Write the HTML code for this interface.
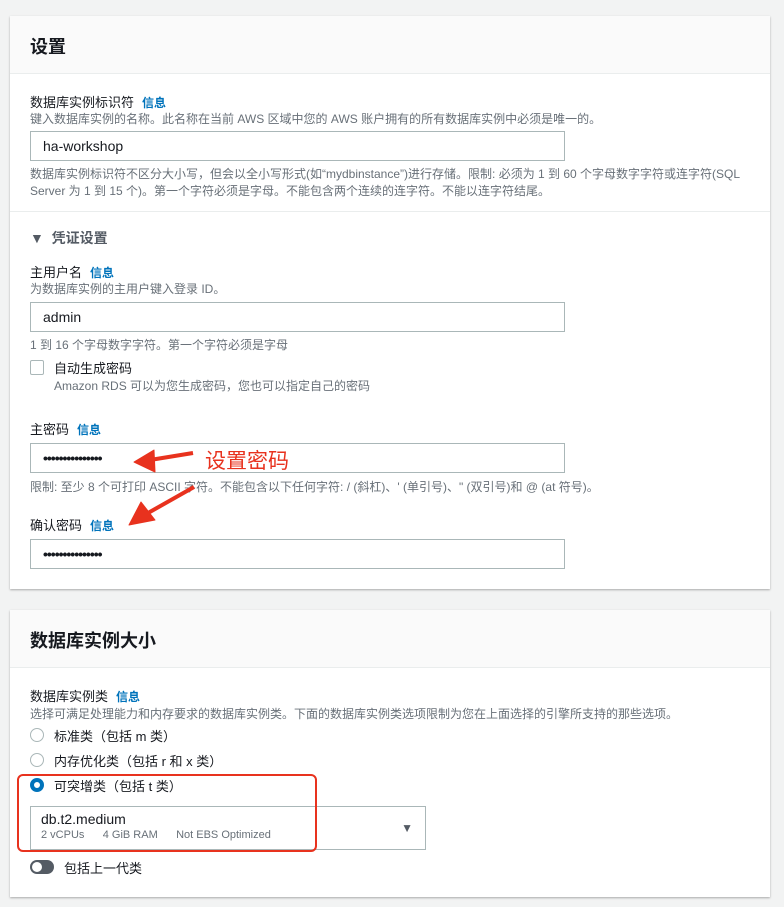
<!DOCTYPE html>
<html><head><meta charset="utf-8"><style>
*{box-sizing:border-box;margin:0;padding:0}
body{width:784px;height:907px;background:#f2f3f3;font-family:"Liberation Sans","Noto Sans CJK SC",sans-serif;color:#16191f;position:relative;overflow:hidden}
.card{position:absolute;left:10px;width:760px;background:#fff;box-shadow:0 1px 2px rgba(0,0,0,.3)}
.hd{height:58px;background:#fafafa;border-bottom:1px solid #eaeded;font-size:18px;font-weight:bold;padding:17px 20px}
.a{position:absolute;white-space:nowrap}
.lb{font-size:13px}
.info{color:#0073bb;font-size:12px;font-weight:bold;margin-left:8px}
.d{font-size:12px;color:#687078}
.in{position:absolute;left:20px;width:535px;height:30px;border:1px solid #aab7b8;font-size:14px;padding:6px 12px}
.dots{font-size:14px;letter-spacing:-1px;font-weight:bold}
.radio{position:absolute;width:14px;height:14px;border:1px solid #aab7b8;border-radius:50%;left:20px}
</style></head><body>
<div class="card" style="top:16px;height:573px">
 <div class="hd">设置</div>
 <div class="a lb" style="left:20px;top:76px">数据库实例标识符<span class="info">信息</span></div>
 <div class="a d" style="left:20px;top:94px">键入数据库实例的名称。此名称在当前 AWS 区域中您的 AWS 账户拥有的所有数据库实例中必须是唯一的。</div>
 <div class="in" style="top:115px">ha-workshop</div>
 <div class="a d" style="left:20px;top:150px;line-height:17px">数据库实例标识符不区分大小写，但会以全小写形式(如“mydbinstance”)进行存储。限制: 必须为 1 到 60 个字母数字字符或连字符(SQL<br>Server 为 1 到 15 个)。第一个字符必须是字母。不能包含两个连续的连字符。不能以连字符结尾。</div>
 <div class="a" style="left:0;top:195px;width:760px;border-top:1px solid #eaeded"></div>
 <div class="a" style="left:20px;top:212px;font-size:14px;font-weight:bold;color:#545b64">▼ &nbsp;凭证设置</div>
 <div class="a lb" style="left:20px;top:246px">主用户名<span class="info">信息</span></div>
 <div class="a d" style="left:20px;top:264px">为数据库实例的主用户键入登录 ID。</div>
 <div class="in" style="top:286px">admin</div>
 <div class="a d" style="left:20px;top:320px">1 到 16 个字母数字字符。第一个字符必须是字母</div>
 <div class="a" style="left:20px;top:344px;width:14px;height:15px;border:1px solid #aab7b8;border-radius:2px"></div>
 <div class="a lb" style="left:44px;top:342px">自动生成密码</div>
 <div class="a d" style="left:44px;top:361px">Amazon RDS 可以为您生成密码，您也可以指定自己的密码</div>
 <div class="a lb" style="left:20px;top:403px">主密码<span class="info">信息</span></div>
 <div class="in dots" style="top:427px">•••••••••••••••</div>
 <div class="a d" style="left:20px;top:462px">限制: 至少 8 个可打印 ASCII 字符。不能包含以下任何字符: / (斜杠)、' (单引号)、" (双引号)和 @ (at 符号)。</div>
 <div class="a lb" style="left:20px;top:499px">确认密码<span class="info">信息</span></div>
 <div class="in dots" style="top:523px">•••••••••••••••</div>
</div>
<div class="a" style="left:205px;top:445px;font-size:21px;color:#e8321e">设置密码</div>
<svg class="a" style="left:0;top:0" width="784" height="907"><g fill="#e8321e" stroke="#e8321e" stroke-linejoin="round"><line x1="193" y1="453" x2="150" y2="460" stroke-width="4"/><polygon points="134,462 154,450 155,472" stroke-width="1"/><line x1="194" y1="487" x2="148" y2="513" stroke-width="4"/><polygon points="129,525 141,502 155,520" stroke-width="1"/></g></svg>
<div class="card" style="top:610px;height:287px">
 <div class="hd">数据库实例大小</div>
 <div class="a lb" style="left:20px;top:76px">数据库实例类<span class="info">信息</span></div>
 <div class="a d" style="left:20px;top:95px">选择可满足处理能力和内存要求的数据库实例类。下面的数据库实例类选项限制为您在上面选择的引擎所支持的那些选项。</div>
 <div class="radio" style="top:118px"></div><div class="a lb" style="left:44px;top:116px">标准类（包括 m 类）</div>
 <div class="radio" style="top:143px"></div><div class="a lb" style="left:44px;top:141px">内存优化类（包括 r 和 x 类）</div>
 <div class="radio" style="top:168px;border:4px solid #0073bb"></div><div class="a lb" style="left:44px;top:166px">可突增类（包括 t 类）</div>
 <div class="a" style="left:20px;top:196px;width:396px;height:44px;border:1px solid #aab7b8;padding:4px 10px"><div style="font-size:14px">db.t2.medium</div><div class="d" style="font-size:11px;margin-top:2px">2 vCPUs &nbsp;&nbsp;&nbsp;&nbsp; 4 GiB RAM &nbsp;&nbsp;&nbsp;&nbsp; Not EBS Optimized</div><div style="position:absolute;right:12px;top:14px;font-size:12px;color:#545b64">▼</div></div>
 <div class="a" style="left:7px;top:164px;width:300px;height:78px;border:2px solid #e8321e;border-radius:6px"></div>
 <div class="a" style="left:20px;top:250px;width:24px;height:14px;border-radius:7px;background:#545b64"><div style="position:absolute;left:2px;top:2px;width:10px;height:10px;border-radius:50%;background:#fff"></div></div>
 <div class="a lb" style="left:54px;top:248px">包括上一代类</div>
</div>
</body></html>
